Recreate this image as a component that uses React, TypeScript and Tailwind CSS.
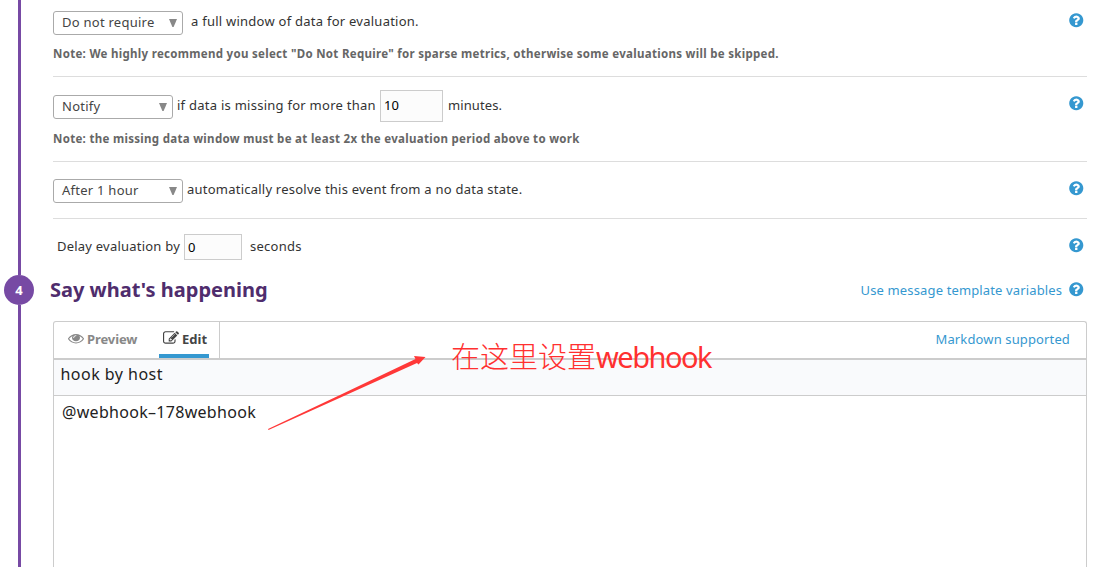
import React from "react";

function Icon({ d, className }: { d: string; className: string }) {
  return (
    <svg viewBox="0 0 1792 1792" preserveAspectRatio="none" fill="currentColor" className={className} aria-hidden="true">
      <path d={d} />
    </svg>
  );
}

const QUESTION =
  "M1024 1376v-192q0-14-9-23t-23-9h-192q-14 0-23 9t-9 23v192q0 14 9 23t23 9h192q14 0 23-9t9-23zm256-672q0-88-55.5-163t-138.5-116-170-41q-243 0-371 213-15 24 8 42l132 100q7 6 19 6 16 0 25-12 53-68 86-92 34-24 86-24 48 0 85.5 26t37.5 59q0 38-20 61t-68 45q-63 28-115.5 86.5t-52.5 125.5v36q0 14 9 23t23 9h192q14 0 23-9t9-23q0-19 21.5-49.5t54.5-49.5q32-18 49-28.5t46-35 44.5-48 28-60.5 12.5-81zm384 192q0 209-103 385.5t-279.5 279.5-385.5 103-385.5-103-279.5-279.5-103-385.5 103-385.5 279.5-279.5 385.5-103 385.5 103 279.5 279.5 103 385.5z";
const EYE =
  "M1664 960q-152-236-381-353 61 104 61 225 0 185-131.5 316.5t-316.5 131.5-316.5-131.5-131.5-316.5q0-121 61-225-229 117-381 353 133 205 333.5 326.5t434.5 121.5 434.5-121.5 333.5-326.5zm-720-384q0-20-14-34t-34-14q-125 0-214.5 89.5t-89.5 214.5q0 20 14 34t34 14 34-14 14-34q0-86 61-147t147-61q20 0 34-14t14-34zm848 384q0 34-20 69-140 230-376.5 368.5t-499.5 138.5-499.5-139-376.5-368q-20-35-20-69t20-69q140-229 376.5-368t499.5-139 499.5 139 376.5 368q20 35 20 69z";
const EDIT =
  "M888 1184l116-116-152-152-116 116v56h96v96h56zm440-720q-16-16-33 1l-350 350q-17 17-1 33t33-1l350-350q17-17 1-33zm80 594v190q0 119-84.5 203.5t-203.5 84.5h-832q-119 0-203.5-84.5t-84.5-203.5v-832q0-119 84.5-203.5t203.5-84.5h832q63 0 117 25 15 7 18 23 3 17-9 29l-49 49q-14 14-32 8-23-6-45-6h-832q-66 0-113 47t-47 113v832q0 66 47 113t113 47h832q66 0 113-47t47-113v-126q0-13 9-22l64-64q15-15 35-7t20 29zm-96-738l288 288-672 672h-288v-288zm444 132l-92 92-288-288 92-92q28-28 68-28t68 28l152 152q28 28 28 68t-28 68z";

function Help() {
  return <Icon d={QUESTION} className="mr-[2.3px] h-[16.5px] w-[16.5px] shrink-0 text-[#3598d0]" />;
}

function Select({ label, className }: { label: string; className: string }) {
  return (
    <button
      className={`flex h-6 shrink-0 items-center justify-between rounded-[3px] border border-[#aaa] bg-white pl-2 pr-[5px] tracking-[0.25px] text-[#444] ${className}`}
    >
      <span className="-mt-[2px]">{label}</span>
      <svg viewBox="0 0 8 8" className="-mt-px h-2 w-2 fill-[#888]">
        <path d="M0 0h8L4.6 8H3.4z" />
      </svg>
    </button>
  );
}

function Note({ children, className }: { children: React.ReactNode; className: string }) {
  return (
    <p className={`whitespace-nowrap text-[11.5px] leading-4 font-bold text-[#666] ${className}`}>{children}</p>
  );
}

export default function App() {
  return (
    <div className="relative flex h-[567px] w-[1098px] overflow-hidden bg-white font-['Noto_Sans','Noto_Sans_CJK_SC',sans-serif] text-[13px] leading-5 text-[#333]">
      <div className="flex w-[38px] shrink-0 flex-col items-center">
        <div className="h-[275px] w-[3px] bg-[#774aa4]" />
        <div className="flex h-[30px] w-[30px] items-center justify-center rounded-full bg-[#774aa4] text-[13px] font-bold text-white">
          4
        </div>
        <div className="w-[3px] flex-1 bg-[#774aa4]" />
      </div>

      <main className="ml-[15px] flex w-[1034px] flex-col">
        <section className="h-[77px] border-b border-[#ddd]">
          <div className="flex h-[40px] items-start">
            <Select label="Do not require" className="mt-[11px] w-[130px]" />
            <span className="mt-[11px] ml-2 tracking-[0.25px]">a full window of data for evaluation.</span>
            <div className="mt-[12px] ml-auto"><Help /></div>
          </div>
          <Note className="mt-[6px] tracking-[0.295px]">
            Note: We highly recommend you select "Do Not Require" for sparse metrics, otherwise some evaluations will be skipped.
          </Note>
        </section>

        <section className="h-[85px] border-b border-[#ddd]">
          <div className="flex h-[48px] items-start">
            <Select label="Notify" className="mt-[18px] w-[120px]" />
            <span className="mt-[18px] ml-1 w-[203px] whitespace-nowrap tracking-[0.26px]">if data is missing for more than</span>
            <div className="mt-[13px] flex h-8 w-[63px] items-center border border-[#ccc] bg-[#fcfcfc] pb-[2px] pl-[3px] text-black">10</div>
            <span className="mt-[18px] ml-[5px] tracking-[0.1px]">minutes.</span>
            <div className="mt-[18px] ml-auto"><Help /></div>
          </div>
          <Note className="mt-[6px] tracking-[0.3px]">Note: the missing data window must be at least 2x the evaluation period above to work</Note>
        </section>

        <section className="flex h-[57px] items-start border-b border-[#ddd]">
          <Select label="After 1 hour" className="mt-[17px] w-[130px]" />
          <span className="mt-[17px] ml-1 tracking-[0.23px]">automatically resolve this event from a no data state.</span>
          <div className="mt-[18px] ml-auto"><Help /></div>
        </section>

        <section className="flex h-[55px] items-start">
          <span className="mt-[17px] ml-1 w-[127px] whitespace-nowrap tracking-[0.22px]">Delay evaluation by</span>
          <div className="mt-[15px] flex h-[26px] w-[58px] items-center border border-[#ccc] bg-[#fcfcfc] pb-px pl-[3px] text-black">0</div>
          <span className="mt-[17px] ml-2 tracking-[0.25px]">seconds</span>
          <div className="mt-[18px] ml-auto"><Help /></div>
        </section>

        <header className="-ml-[3px] flex h-[47px] items-start">
          <h2 className="mt-[2px] text-[20px] leading-[28px] font-bold text-[#4f2d6d]">Say what's happening</h2>
          <a className="mt-[6px] ml-auto mr-[6px] tracking-[0.14px] text-[#3598d0]">Use message template variables</a>
          <div className="mt-[7px]"><Help /></div>
        </header>

        <div className="flex flex-1 flex-col rounded-t-[3px] border border-b-0 border-[#ccc]">
          <div className="flex h-[38px] items-stretch border-b-2 border-[#ccc]">
            <div className="flex w-[166px] border-r border-[#ccc]">
              <div className="ml-[14px] flex h-[34px] w-[91px] items-center font-bold text-[#888]">
                <Icon d={EYE} className="-mt-[2px] mr-[3px] h-[14.5px] w-4" />
                <span className="tracking-[-0.1px]">Preview</span>
              </div>
              <div className="flex h-[36px] w-[50px] items-center border-b-4 border-[#3598d0] pt-[2px] pl-1 font-bold text-[#444]">
                <Icon d={EDIT} className="-mt-[2px] mr-[3px] h-4 w-4" />
                <span>Edit</span>
              </div>
            </div>
            <a className="mt-[7px] mr-4 ml-auto tracking-[0.13px] text-[#3598d0]">Markdown supported</a>
          </div>
          <div className="h-[36px] border-b border-[#ccc] bg-[#f9fafc] pt-[2px] pl-[6.5px] text-[16px] leading-6 tracking-[0.47px] text-[#222]">
            hook by host
          </div>
          <div className="pt-[4px] pl-2 text-[16px] leading-6 tracking-[0.3px] text-[#222]">@webhook–178webhook</div>
        </div>
      </main>

      <svg className="absolute top-[350px] left-[264px] h-[84px] w-[166px]" viewBox="0 0 166 84">
        <path d="M4 79L76 45L151.5 9L150 6L161.5 7L154.5 14.5L153 13L76 47.8L4.5 80Z" fill="#ff3838" />
      </svg>
      <div className="absolute top-[337px] left-[451px] flex items-baseline whitespace-nowrap text-[#ff3030]">
        <span className="font-['Noto_Sans_CJK_SC',sans-serif] text-[29px] leading-[36px] font-light">在这里设置</span>
        <span className="text-[29px] leading-[36px] tracking-[-1.5px]">webhook</span>
      </div>
    </div>
  );
}
